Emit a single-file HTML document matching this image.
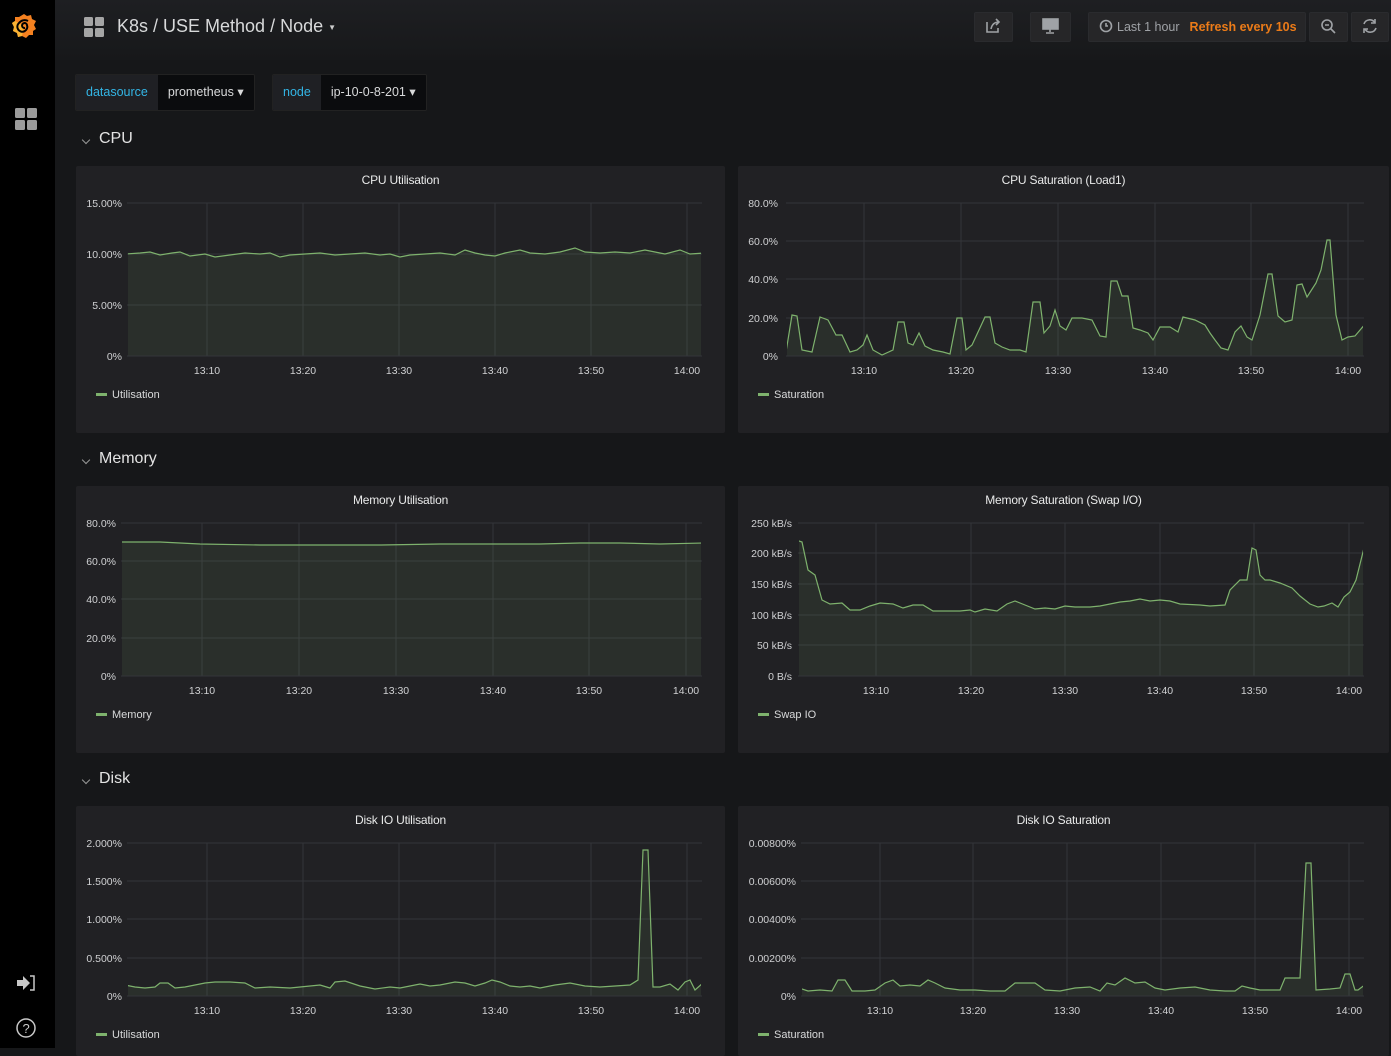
<!DOCTYPE html>
<html><head><meta charset="utf-8"><style>
*{margin:0;padding:0;box-sizing:border-box}
body{width:1391px;height:1048px;overflow:hidden;background:#161719;font-family:"Liberation Sans",sans-serif;position:relative;color:#d8d9da}
.side{position:absolute;left:0;top:0;width:55px;height:1048px;background:#000}
.top{position:absolute;left:55px;top:0;right:0;height:60px;background:linear-gradient(#1e1f22,#17181a)}
.btn{position:absolute;top:12px;height:30px;background:#262628;border-radius:2px;border:1px solid #2a2b2e}
.title{position:absolute;left:117px;top:16px;font-size:18px;color:#d8d9da}
.var{position:absolute;top:74px;height:37px;display:flex;font-size:12.5px;border-radius:2px;overflow:hidden;border:1px solid #222}
.var .l{background:#1f2024;color:#33b5e5;padding:0 10px;line-height:35px}
.var .v{background:#0b0c0e;color:#d8d9da;padding:0 10px;line-height:35px}
.row{position:absolute;left:99px;font-size:16px;color:#e3e3e3}
.chev{position:absolute;left:83px;width:6px;height:6px;border-right:1.5px solid #999;border-bottom:1.5px solid #999;transform:rotate(45deg)}
.panel{position:absolute;background:#212124;border-radius:2px}
.pt{position:absolute;top:7px;left:0;right:0;text-align:center;font-size:12px;color:#e9eaea;letter-spacing:-0.2px}
svg{position:absolute;left:0;top:0}
</style></head><body>
<div class="side"></div>
<div class="top"></div>
<div class="title">K8s / USE Method / Node <span style="font-size:8px;color:#ccc;vertical-align:middle">▼</span></div>
<div class="btn" style="left:974px;width:39px"></div>
<div class="btn" style="left:1030px;width:41px"></div>
<div class="btn" style="left:1088px;width:218px;font-size:12.5px;line-height:28px;padding-left:28px;color:#9fa2a6">Last 1 hour<span style="color:#eb7b18;margin-left:10px;font-weight:bold">Refresh every 10s</span></div>
<div class="btn" style="left:1309px;width:39px"></div>
<div class="btn" style="left:1351px;width:38px"></div>

<div class="var" style="left:75px"><div class="l">datasource</div><div class="v">prometheus ▾</div></div>
<div class="var" style="left:272px"><div class="l">node</div><div class="v">ip-10-0-8-201 ▾</div></div>

<div class="chev" style="top:137px"></div><div class="row" style="top:130px">CPU</div>
<div class="chev" style="top:457px"></div><div class="row" style="top:450px">Memory</div>
<div class="chev" style="top:777px"></div><div class="row" style="top:770px">Disk</div>

<div class="panel" style="left:76px;top:166px;width:649px;height:267px"><div class="pt">CPU Utilisation</div></div>
<div class="panel" style="left:738px;top:166px;width:651px;height:267px"><div class="pt">CPU Saturation (Load1)</div></div>
<div class="panel" style="left:76px;top:486px;width:649px;height:267px"><div class="pt">Memory Utilisation</div></div>
<div class="panel" style="left:738px;top:486px;width:651px;height:267px"><div class="pt">Memory Saturation (Swap I/O)</div></div>
<div class="panel" style="left:76px;top:806px;width:649px;height:250px"><div class="pt">Disk IO Utilisation</div></div>
<div class="panel" style="left:738px;top:806px;width:651px;height:250px"><div class="pt">Disk IO Saturation</div></div>

<svg width="1391" height="1048" font-family="Liberation Sans, sans-serif" font-size="10.5" fill="#d0d1d3">
<defs>
<clipPath id="c1"><rect x="128" y="190" width="573" height="165.5"/></clipPath>
<clipPath id="c2"><rect x="787" y="190" width="576" height="165.5"/></clipPath>
<clipPath id="c3"><rect x="122" y="510" width="579" height="165.5"/></clipPath>
<clipPath id="c4"><rect x="799" y="510" width="564" height="165.5"/></clipPath>
<clipPath id="c5"><rect x="128" y="830" width="573" height="165.5"/></clipPath>
<clipPath id="c6"><rect x="802" y="830" width="561" height="165.5"/></clipPath>
</defs>
<!-- sidebar icons -->
<g transform="translate(24,26)">
<path d="M0-12 L3-10 L7-11 L8-7 L12-5 L10-1 L12 3 L9 5 L9 9 L5 9 L2 12 L-2 10 L-6 11 L-7 7 L-11 5 L-10 1 L-12-3 L-9-5 L-9-9 L-5-9 Z" fill="#f48120"/>
<path d="M-2 10 L-6 11 L-7 7 L-11 5 L-10 1 L-12-3 L-9-5 L0 0Z" fill="#f9b233"/>
<path d="M1 2 a2.5 2.5 0 1 1 2-3 a5 5 0 1 1 -8 -2 a7 7 0 0 1 9 -2" fill="none" stroke="#000" stroke-width="2"/>
</g>
<g fill="#9b9b9b"><rect x="15" y="108" width="10" height="10" rx="1.5"/><rect x="27" y="108" width="10" height="10" rx="1.5"/><rect x="15" y="120" width="10" height="10" rx="1.5"/><rect x="27" y="120" width="10" height="10" rx="1.5"/></g>
<g fill="#a5a5a5"><rect x="84" y="17" width="9" height="9" rx="1.5"/><rect x="95" y="17" width="9" height="9" rx="1.5"/><rect x="84" y="28" width="9" height="9" rx="1.5"/><rect x="95" y="28" width="9" height="9" rx="1.5"/></g>
<path d="M17 980h6v-4l7 7-7 7v-4h-6z" fill="#c8c8c8"/><path d="M30 976h4v14h-4" fill="none" stroke="#c8c8c8" stroke-width="1.5"/>
<circle cx="26" cy="1028" r="9" fill="none" stroke="#c8c8c8" stroke-width="1.5"/><text x="22.5" y="1033" font-size="13" fill="#c8c8c8">?</text>
<!-- top btn icons -->
<g stroke="#9fa2a6" fill="none" stroke-width="1.6"><path d="M987 22v10h11v-4"/><path d="M991 29c1-5 4-7 8-7M996 19l3 3-3 3"/>
<rect x="1043" y="19" width="15" height="10" fill="#9fa2a6"/><path d="M1050 29v3M1046 33h8"/>
<circle cx="1106" cy="26" r="5.5"/><path d="M1106 23v3h2"/>
<circle cx="1327" cy="25" r="5"/><path d="M1331 29l4 4M1325 25h4"/>
<path d="M1364 24a6 6 0 0 1 11-1M1376 28a6 6 0 0 1-11 1"/><path d="M1375 19v4h-4M1364 33v-4h4"/></g>

<g stroke="#34353a" stroke-width="1">
<path d="M127 203H702M127 254H702M127 305H702M127 356H702M207 203V356M303 203V356M399 203V356M495 203V356M591 203V356M687 203V356"/>
<path d="M786 203H1364M786 241H1364M786 279H1364M786 318H1364M786 356H1364M864 203V356M961 203V356M1058 203V356M1155 203V356M1251 203V356M1348 203V356"/>
<path d="M121 523H702M121 561H702M121 599H702M121 638H702M121 676H702M202 523V676M299 523V676M396 523V676M493 523V676M589 523V676M686 523V676"/>
<path d="M798 523H1364M798 553H1364M798 584H1364M798 615H1364M798 645H1364M798 676H1364M876 523V676M971 523V676M1065 523V676M1160 523V676M1254 523V676M1349 523V676"/>
<path d="M127 843H702M127 881H702M127 919H702M127 958H702M127 996H702M207 843V996M303 843V996M399 843V996M495 843V996M591 843V996M687 843V996"/>
<path d="M801 843H1364M801 881H1364M801 919H1364M801 958H1364M801 996H1364M880 843V996M973 843V996M1067 843V996M1161 843V996M1255 843V996M1349 843V996"/>
</g>

<g fill="rgba(126,178,109,0.1)" stroke="#7eb26d" stroke-width="1.2">
<polyline clip-path="url(#c1)" points="125,358 125,254 140,253 150,252 160,255 172,253 180,252 190,256 205,254 215,257 230,255 245,253 260,254 270,253 280,257 290,255 305,254 320,253 335,255 350,254 365,253 380,255 390,254 400,257 410,255 425,254 440,253 455,255 465,250 475,253 485,255 495,256 505,253 520,250 530,253 545,254 560,252 575,248 585,252 600,253 615,252 630,253 645,250 655,252 665,254 680,250 690,254 704,253 704,358"/>
<polyline clip-path="url(#c2)" points="784,358 786,352 792,315 797,316 802,350 812,352 820,317 828,320 836,335 842,335 850,352 857,350 863,345 867,335 873,350 882,355 893,350 898,322 904,322 908,343 913,345 919,333 925,346 933,350 943,352 950,354 957,318 962,318 966,350 972,345 985,317 990,317 995,343 1002,347 1010,350 1020,350 1026,352 1033,302 1040,302 1044,333 1050,326 1055,310 1060,326 1066,330 1072,318 1082,318 1092,320 1100,336 1106,337 1111,281 1117,281 1122,296 1128,296 1133,328 1140,330 1148,333 1153,340 1160,327 1170,327 1178,332 1183,317 1195,320 1205,325 1210,333 1215,340 1221,348 1228,350 1235,332 1241,326 1247,337 1252,340 1260,315 1268,274 1272,274 1278,316 1285,322 1292,320 1297,285 1302,284 1307,297 1316,283 1321,270 1327,240 1330,240 1336,315 1342,340 1348,337 1355,336 1366,323 1366,358"/>
<polyline clip-path="url(#c3)" points="119,678 119,542 160,542 200,544 260,545 320,545 380,545 440,544 500,544 540,544 580,543 620,543 660,544 704,543 704,678"/>
<polyline clip-path="url(#c4)" points="796,678 796,540 802,542 808,570 815,575 822,600 830,604 842,603 850,610 860,610 870,606 880,603 893,604 903,608 913,605 923,605 933,611 945,611 960,611 970,610 975,612 985,609 997,611 1007,604 1015,601 1025,605 1035,609 1045,608 1055,609 1065,606 1075,607 1090,607 1100,606 1110,604 1120,602 1130,601 1140,599 1150,601 1160,600 1170,601 1180,604 1200,605 1210,606 1225,605 1230,590 1240,580 1247,580 1252,548 1256,550 1260,575 1265,580 1270,580 1280,583 1292,588 1300,596 1310,604 1318,607 1324,606 1332,603 1338,607 1344,597 1350,592 1356,580 1366,540 1366,678"/>
<polyline clip-path="url(#c5)" points="125,998 125,985 135,987 145,988 155,987 160,983 168,983 175,988 185,987 195,985 205,983 215,982 230,982 245,983 255,988 270,987 290,988 300,987 320,985 330,988 335,982 345,981 360,986 375,989 390,987 400,988 410,986 420,984 430,986 440,985 455,982 465,983 475,986 485,983 492,980 500,982 510,986 520,987 530,986 540,988 555,985 570,983 585,986 600,987 615,986 630,985 638,980 643,850 648,850 653,987 660,987 670,984 678,990 685,982 690,980 695,990 704,982 704,998"/>
<polyline clip-path="url(#c6)" points="799,998 799,988 808,991 820,990 832,991 838,980 845,980 852,991 865,991 875,990 885,983 893,980 900,986 910,985 920,986 928,980 935,983 945,988 960,990 975,990 990,991 1005,991 1015,983 1025,983 1035,983 1045,990 1060,991 1075,988 1090,987 1100,991 1107,983 1115,985 1125,978 1135,983 1145,982 1155,988 1165,990 1180,988 1195,987 1210,990 1225,991 1235,991 1242,986 1250,988 1260,990 1280,990 1285,978 1300,978 1306,863 1311,863 1316,990 1330,989 1340,988 1345,974 1350,974 1355,990 1358,990 1366,984 1366,998"/>
</g>

<g text-anchor="end">
<text x="122" y="207">15.00%</text><text x="122" y="258">10.00%</text><text x="122" y="309">5.00%</text><text x="122" y="360">0%</text>
<text x="778" y="207">80.0%</text><text x="778" y="245">60.0%</text><text x="778" y="283">40.0%</text><text x="778" y="322">20.0%</text><text x="778" y="360">0%</text>
<text x="116" y="527">80.0%</text><text x="116" y="565">60.0%</text><text x="116" y="603">40.0%</text><text x="116" y="642">20.0%</text><text x="116" y="680">0%</text>
<text x="792" y="527">250 kB/s</text><text x="792" y="557">200 kB/s</text><text x="792" y="588">150 kB/s</text><text x="792" y="619">100 kB/s</text><text x="792" y="649">50 kB/s</text><text x="792" y="680">0 B/s</text>
<text x="122" y="847">2.000%</text><text x="122" y="885">1.500%</text><text x="122" y="923">1.000%</text><text x="122" y="962">0.500%</text><text x="122" y="1000">0%</text>
<text x="796" y="847">0.00800%</text><text x="796" y="885">0.00600%</text><text x="796" y="923">0.00400%</text><text x="796" y="962">0.00200%</text><text x="796" y="1000">0%</text>
</g>
<g text-anchor="middle">
<text x="207" y="374">13:10</text><text x="303" y="374">13:20</text><text x="399" y="374">13:30</text><text x="495" y="374">13:40</text><text x="591" y="374">13:50</text><text x="687" y="374">14:00</text>
<text x="864" y="374">13:10</text><text x="961" y="374">13:20</text><text x="1058" y="374">13:30</text><text x="1155" y="374">13:40</text><text x="1251" y="374">13:50</text><text x="1348" y="374">14:00</text>
<text x="202" y="694">13:10</text><text x="299" y="694">13:20</text><text x="396" y="694">13:30</text><text x="493" y="694">13:40</text><text x="589" y="694">13:50</text><text x="686" y="694">14:00</text>
<text x="876" y="694">13:10</text><text x="971" y="694">13:20</text><text x="1065" y="694">13:30</text><text x="1160" y="694">13:40</text><text x="1254" y="694">13:50</text><text x="1349" y="694">14:00</text>
<text x="207" y="1014">13:10</text><text x="303" y="1014">13:20</text><text x="399" y="1014">13:30</text><text x="495" y="1014">13:40</text><text x="591" y="1014">13:50</text><text x="687" y="1014">14:00</text>
<text x="880" y="1014">13:10</text><text x="973" y="1014">13:20</text><text x="1067" y="1014">13:30</text><text x="1161" y="1014">13:40</text><text x="1255" y="1014">13:50</text><text x="1349" y="1014">14:00</text>
</g>
<g fill="#7eb26d"><rect x="96" y="393" width="11" height="3"/><rect x="758" y="393" width="11" height="3"/><rect x="96" y="713" width="11" height="3"/><rect x="758" y="713" width="11" height="3"/><rect x="96" y="1033" width="11" height="3"/><rect x="758" y="1033" width="11" height="3"/></g>
<g font-size="11" fill="#d8d9da">
<text x="112" y="398">Utilisation</text><text x="774" y="398">Saturation</text>
<text x="112" y="718">Memory</text><text x="774" y="718">Swap IO</text>
<text x="112" y="1038">Utilisation</text><text x="774" y="1038">Saturation</text>
</g>
</svg>
</body></html>
